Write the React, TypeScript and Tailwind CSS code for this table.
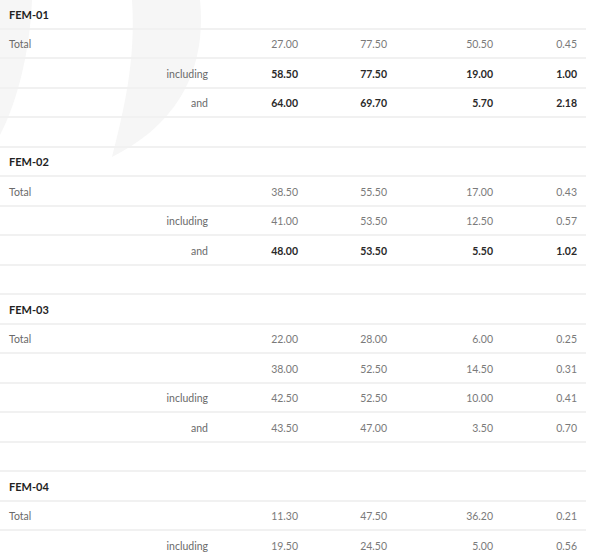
import React from "react";

type Row = { a?: string; b?: string; v: string[]; bold?: boolean };
type Group = { title: string; rows: Row[]; last?: boolean };

const groups: Group[] = [
  {
    title: "FEM-01",
    rows: [
      { a: "Total", v: ["27.00", "77.50", "50.50", "0.45"] },
      { b: "including", v: ["58.50", "77.50", "19.00", "1.00"], bold: true },
      { b: "and", v: ["64.00", "69.70", "5.70", "2.18"], bold: true },
    ],
  },
  {
    title: "FEM-02",
    rows: [
      { a: "Total", v: ["38.50", "55.50", "17.00", "0.43"] },
      { b: "including", v: ["41.00", "53.50", "12.50", "0.57"] },
      { b: "and", v: ["48.00", "53.50", "5.50", "1.02"], bold: true },
    ],
  },
  {
    title: "FEM-03",
    rows: [
      { a: "Total", v: ["22.00", "28.00", "6.00", "0.25"] },
      { v: ["38.00", "52.50", "14.50", "0.31"] },
      { b: "including", v: ["42.50", "52.50", "10.00", "0.41"] },
      { b: "and", v: ["43.50", "47.00", "3.50", "0.70"] },
    ],
  },
  {
    title: "FEM-04",
    last: true,
    rows: [
      { a: "Total", v: ["11.30", "47.50", "36.20", "0.21"] },
      { b: "including", v: ["19.50", "24.50", "5.00", "0.56"] },
    ],
  },
];

const rowBase =
  "grid grid-cols-[110px_107px_90px_89px_106px_84px] h-[29.5px] items-center border-b-2 border-[#f1f1f1]";

function DataRow({ r }: { r: Row }) {
  const num = r.bold
    ? "text-right pr-[9px] font-bold text-[#2a2a2a]"
    : "text-right pr-[9px] text-[#7a7a7a]";
  return (
    <div className={rowBase + " pt-[4px]"}>
      <div className="pl-[9px] text-[#6a6a6a]">{r.a ?? ""}</div>
      <div className="text-right pr-[9px] text-[#6a6a6a]">{r.b ?? ""}</div>
      {r.v.map((x, i) => (
        <div key={i} className={num}>
          {x}
        </div>
      ))}
    </div>
  );
}

export default function App() {
  return (
    <div className="relative w-[604px] h-[557px] overflow-hidden bg-white text-[10.5px] [font-family:Lato,'Open_Sans',sans-serif]">
      <svg
        className="absolute left-0 top-0"
        width="260"
        height="170"
        viewBox="0 0 260 170"
      >
        <path d="M0 0 L32 0 C30 50 18 100 0 135 Z" fill="#f6f6f6" />
        <path
          d="M132 0 L200 0 C206 60 186 120 112 157 C124 110 136 60 132 0 Z"
          fill="#f6f6f6"
        />
      </svg>
      <div className="relative w-[586px]">
        {groups.map((g) => (
          <div key={g.title}>
            <div className={rowBase + " pt-[2px]"}>
              <div className="pl-[9px] font-bold text-[#222] text-[11px]">
                {g.title}
              </div>
            </div>
            {g.rows.map((r, i) => (
              <DataRow key={i} r={r} />
            ))}
            {!g.last && <div className={rowBase} />}
          </div>
        ))}
      </div>
    </div>
  );
}
